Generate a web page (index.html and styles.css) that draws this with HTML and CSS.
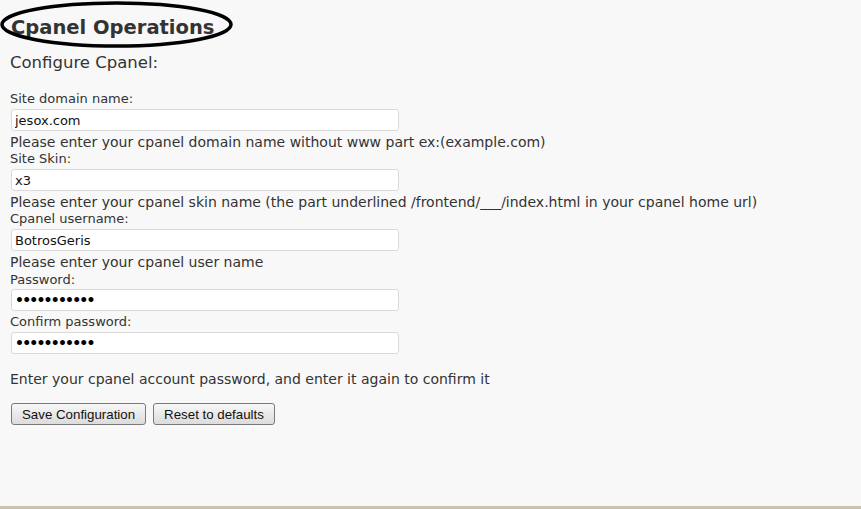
FILE: index.html
```html
<!DOCTYPE html>
<html>
<head>
<meta charset="utf-8">
<link rel="stylesheet" href="styles.css">
</head>
<body>
<div class="page">
  <div class="title-wrap">
    <h1 class="title">Cpanel Operations</h1>
    <svg class="circle" width="240" height="52" viewBox="0 0 240 52"><ellipse cx="116.5" cy="24.5" rx="114.5" ry="21.5" fill="none" stroke="#000" stroke-width="3.5"/></svg>
  </div>
  <h2 class="subtitle">Configure Cpanel:</h2>
  <form class="form">
    <label class="label">Site domain name:</label>
    <input class="field" type="text" value="jesox.com">
    <p class="help">Please enter your cpanel domain name without www part ex:(example.com)</p>
    <label class="label">Site Skin:</label>
    <input class="field" type="text" value="x3">
    <p class="help">Please enter your cpanel skin name (the part underlined /frontend/___/index.html in your cpanel home url)</p>
    <label class="label">Cpanel username:</label>
    <input class="field" type="text" value="BotrosGeris">
    <p class="help">Please enter your cpanel user name</p>
    <label class="label label-pw">Password:</label>
    <input class="field secret" type="password" value="abcdefghijk">
    <label class="label label-gap">Confirm password:</label>
    <input class="field secret" type="password" value="abcdefghijk">
    <p class="help help-wide">Enter your cpanel account password, and enter it again to confirm it</p>
    <div class="buttons">
      <button type="button" class="btn">Save Configuration</button>
      <button type="button" class="btn">Reset to defaults</button>
    </div>
  </form>
</div>
<div class="footer-strip"></div>
</body>
</html>
```

FILE: styles.css
```css
html, body {
  margin: 0;
  padding: 0;
  height: 100%;
}
body {
  background: #f8f8f8;
  font-family: "DejaVu Sans", Verdana, sans-serif;
  color: #333;
  display: flex;
  flex-direction: column;
}
.page {
  flex: 1;
  padding: 0 10px;
}
.title-wrap {
  position: relative;
  height: 46px;
}
.title {
  margin: 0;
  padding: 16px 0 0 1px;
  font-size: 19.5px;
  font-weight: bold;
  line-height: 24px;
  color: #333;
}
.circle {
  position: absolute;
  left: -10px;
  top: 0;
}
.subtitle {
  margin: 7px 0 0;
  font-size: 16.5px;
  font-weight: normal;
  line-height: 20px;
}
.form {
  margin-top: 18px;
  display: flex;
  flex-direction: column;
  align-items: flex-start;
}
.label {
  font-size: 13px;
  line-height: 16px;
}
.label-pw {
  margin-top: 1px;
  margin-bottom: -1px;
}
.label-gap {
  margin-top: 3px;
}
.field {
  margin: 2px 0 0 1px;
  width: 388px;
  height: 22px;
  box-sizing: border-box;
  border: 1px solid #dadada;
  border-radius: 3px;
  background: #fff;
  padding: 0 3px;
  font-family: "DejaVu Sans", Verdana, sans-serif;
  font-size: 13px;
  color: #111;
}
.secret {
  font-size: 14px;
  font-weight: bold;
  letter-spacing: -1.8px;
  color: #000;
}
.help {
  margin: 3px 0 0;
  font-size: 14px;
  line-height: 17px;
}
.help-wide {
  margin-top: 17px;
}
.buttons {
  margin-top: 15px;
  margin-left: 1px;
  display: flex;
  gap: 7px;
}
.btn {
  height: 22px;
  padding: 0 10px;
  font-family: "Liberation Sans", Arial, sans-serif;
  font-size: 13.3px;
  color: #111;
  border: 1px solid #7a7a7a;
  border-radius: 3px;
  background: linear-gradient(#f7f7f7, #dcdcdc);
}
.footer-strip {
  height: 3px;
  background: #cbc2ab;
}
```
